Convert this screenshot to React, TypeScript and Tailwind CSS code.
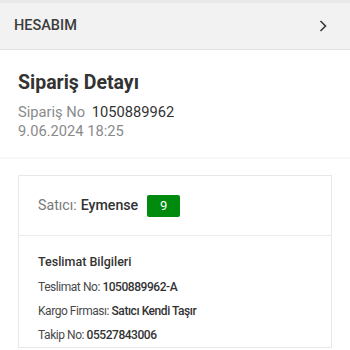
import React from "react";

export default function App() {
  return (
    <div className="w-[350px] h-[350px] overflow-hidden bg-white" style={{ fontFamily: "Roboto, 'Noto Sans', sans-serif" }}>
      <div className="h-[3px] bg-[#e9e9e9]" />
      <div className="h-[47px] bg-[#f2f2f2] border-b border-[#e3e3e3] flex items-center justify-between pl-[14px] pr-[22px]">
        <span className="text-[14.5px] font-medium text-[#3c3c3c]">HESABIM</span>
        <svg width="10" height="14" viewBox="0 0 10 14" fill="none">
          <path d="M2.5 2 L7.5 7 L2.5 12" stroke="#3a3a3a" strokeWidth="1.6" />
        </svg>
      </div>
      <div className="pl-[18px] pt-[19px]">
        <div className="text-[19.5px] font-bold text-[#333] leading-[28px]">Sipariş Detayı</div>
        <div className="mt-[6px] text-[14.7px] leading-[19px] text-[#8a8a8a]">
          Sipariş No <span className="ml-[3px] text-[#333]">1050889962</span>
        </div>
        <div className="text-[14.7px] leading-[19px] text-[#8a8a8a]">9.06.2024 18:25</div>
      </div>
      <div className="mt-[16px] h-[2px] bg-[#f8f8f8]" />
      <div className="mt-[16px] ml-[18px] w-[314px] border border-[#e8e8e8]">
        <div className="h-[60px] border-b border-[#ececec] flex items-center pl-[19px]">
          <span className="text-[14.2px] text-[#777]">Satıcı:</span>
          <span className="ml-[4px] text-[14.2px] font-medium text-[#333]">Eymense</span>
          <span className="ml-[9px] w-[33px] h-[22px] rounded-[2px] bg-[#008a0e] text-white text-[13px] flex items-center justify-center">9</span>
        </div>
        <div className="pl-[19px] pt-[16px]">
          <div className="text-[12.5px] font-medium text-[#333] leading-[20px]">Teslimat Bilgileri</div>
          <div className="mt-[3px] text-[12px] tracking-[-0.45px] leading-[24px] text-[#4a4a4a]">
            Teslimat No: <span className="font-medium text-[#333]">1050889962-A</span>
          </div>
          <div className="text-[12px] tracking-[-0.45px] leading-[24px] text-[#4a4a4a]">
            Kargo Firması: <span className="font-medium text-[#333]">Satıcı Kendi Taşır</span>
          </div>
          <div className="text-[12px] tracking-[-0.45px] leading-[24px] text-[#4a4a4a]">
            Takip No: <span className="font-medium text-[#333]">05527843006</span>
          </div>
        </div>
      </div>
    </div>
  );
}
